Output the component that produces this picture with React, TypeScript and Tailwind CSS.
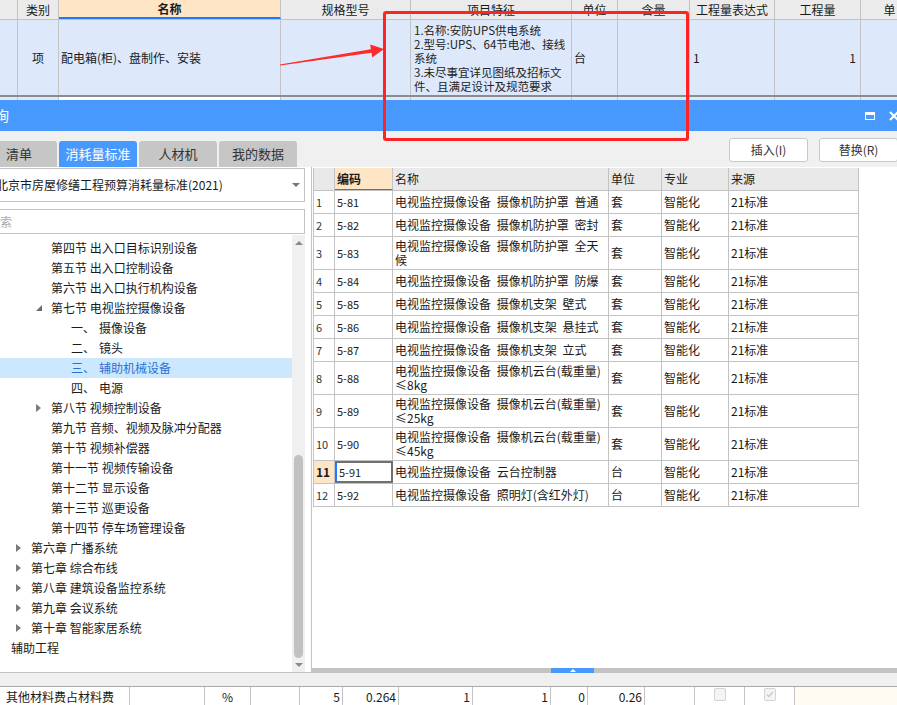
import React from "react";

const cjk = "font-['Noto_Sans_CJK_SC','Noto_Sans',sans-serif]";

// background spreadsheet (top of the screenshot)
const sheetCols = [
  { w: 18, head: "" },
  { w: 41, head: "类别" },
  { w: 222, head: "名称", active: true },
  { w: 130, head: "规格型号" },
  { w: 161, head: "项目特征" },
  { w: 46, head: "单位" },
  { w: 72, head: "含量" },
  { w: 85, head: "工程量表达式" },
  { w: 86, head: "工程量" },
  { w: 58, head: "单" },
];

const features = [
  "1.名称:安防UPS供电系统",
  "2.型号:UPS、64节电池、接线",
  "系统",
  "3.未尽事宜详见图纸及招标文",
  "件、且满足设计及规范要求",
];

type TreeItem = {
  text: string;
  pad: number;
  arrow?: "open" | "closed";
  prefix?: string;
  selected?: boolean;
  plain?: boolean;
};

const treeItems: TreeItem[] = [
  { text: "第四节 出入口目标识别设备", pad: 35 },
  { text: "第五节 出入口控制设备", pad: 35 },
  { text: "第六节 出入口执行机构设备", pad: 35 },
  { text: "第七节 电视监控摄像设备", pad: 35, arrow: "open" },
  { prefix: "一、", text: "摄像设备", pad: 55 },
  { prefix: "二、", text: "镜头", pad: 55 },
  { prefix: "三、", text: "辅助机械设备", pad: 55, selected: true },
  { prefix: "四、", text: "电源", pad: 55 },
  { text: "第八节 视频控制设备", pad: 35, arrow: "closed" },
  { text: "第九节 音频、视频及脉冲分配器", pad: 35 },
  { text: "第十节 视频补偿器", pad: 35 },
  { text: "第十一节 视频传输设备", pad: 35 },
  { text: "第十二节 显示设备", pad: 35 },
  { text: "第十三节 巡更设备", pad: 35 },
  { text: "第十四节 停车场管理设备", pad: 35 },
  { text: "第六章 广播系统", pad: 15, arrow: "closed" },
  { text: "第七章 综合布线", pad: 15, arrow: "closed" },
  { text: "第八章 建筑设备监控系统", pad: 15, arrow: "closed" },
  { text: "第九章 会议系统", pad: 15, arrow: "closed" },
  { text: "第十章 智能家居系统", pad: 15, arrow: "closed" },
  { text: "辅助工程", pad: 11, plain: true },
];

const quotaCols = [21, 58, 216, 53, 67, 130];

const quotaRows = [
  { no: "1", code: "5-81", name: "电视监控摄像设备 摄像机防护罩 普通", unit: "套" },
  { no: "2", code: "5-82", name: "电视监控摄像设备 摄像机防护罩 密封", unit: "套" },
  { no: "3", code: "5-83", name: "电视监控摄像设备 摄像机防护罩 全天\n候", unit: "套" },
  { no: "4", code: "5-84", name: "电视监控摄像设备 摄像机防护罩 防爆", unit: "套" },
  { no: "5", code: "5-85", name: "电视监控摄像设备 摄像机支架 壁式", unit: "套" },
  { no: "6", code: "5-86", name: "电视监控摄像设备 摄像机支架 悬挂式", unit: "套" },
  { no: "7", code: "5-87", name: "电视监控摄像设备 摄像机支架 立式", unit: "套" },
  { no: "8", code: "5-88", name: "电视监控摄像设备 摄像机云台(载重量)\n≤8kg", unit: "套" },
  { no: "9", code: "5-89", name: "电视监控摄像设备 摄像机云台(载重量)\n≤25kg", unit: "套" },
  { no: "10", code: "5-90", name: "电视监控摄像设备 摄像机云台(载重量)\n≤45kg", unit: "套" },
  { no: "11", code: "5-91", name: "电视监控摄像设备 云台控制器", unit: "台", current: true },
  { no: "12", code: "5-92", name: "电视监控摄像设备 照明灯(含红外灯)", unit: "台" },
];

type BottomCell = { w: number; text: string; align?: "left" | "center" | "right"; box?: "empty" | "checked" };

const bottomCells: BottomCell[] = [
  { w: 130, text: "其他材料费占材料费", align: "left" },
  { w: 75, text: "" },
  { w: 46, text: "%", align: "center" },
  { w: 49, text: "" },
  { w: 43, text: "5", align: "right" },
  { w: 56, text: "0.264", align: "right" },
  { w: 74, text: "1", align: "right" },
  { w: 78, text: "1", align: "right" },
  { w: 37, text: "0", align: "right" },
  { w: 57, text: "0.26", align: "right" },
  { w: 50, text: "" },
  { w: 50, text: "", align: "center", box: "empty" },
  { w: 50, text: "", align: "center", box: "checked" },
];

const alignClass = {
  left: "justify-start pl-[6px]",
  center: "justify-center",
  right: "justify-end pr-[2px]",
};

const TreeArrow = ({ kind }: { kind?: "open" | "closed" }) => (
  <span className="flex w-[16px] items-center justify-start pl-[1px]">
    {kind === "open" && (
      <svg width="6" height="6" viewBox="0 0 6 6">
        <polygon points="6,0 6,6 0,6" fill="#6b6b6b" />
      </svg>
    )}
    {kind === "closed" && (
      <svg width="5" height="8" viewBox="0 0 5 8">
        <polygon points="0,0 5,4 0,8" fill="#7a7a7a" />
      </svg>
    )}
  </span>
);

const TopSheet = () => (
  <div className="h-[100px] bg-[#dde9fb]">
    <div className="flex h-[20px] border-b border-[#c3c3c3] bg-[#ebebeb]">
      {sheetCols.map((c, i) => (
        <div
          key={i}
          style={{ width: c.w }}
          className={`flex shrink-0 items-center justify-center border-r border-[#c3c3c3] leading-none ${
            c.active ? "border-b-2 border-b-[#1e7bff] bg-[#fde5c6] font-bold" : ""
          }`}
        >
          {c.head}
        </div>
      ))}
    </div>
    <div className="flex h-[75px]">
      {sheetCols.map((c, i) => (
        <div key={i} style={{ width: c.w }} className="flex shrink-0 items-center border-r border-[#c3c3c3]">
          {i === 1 && <span className="w-full text-center">项</span>}
          {i === 2 && <span className="pl-[2px]">配电箱(柜)、盘制作、安装</span>}
          {i === 4 && (
            <div className="pl-[3px] text-[11.5px] leading-[14px] text-[#222]">
              {features.map((f) => (
                <div key={f} className="h-[14px] whitespace-nowrap">
                  {f}
                </div>
              ))}
            </div>
          )}
          {i === 5 && <span className="pl-[2px]">台</span>}
          {i === 7 && <span className="pl-[3px]">1</span>}
          {i === 8 && <span className="w-full pr-[4px] text-right">1</span>}
        </div>
      ))}
    </div>
    <div className="h-[2px] bg-[#8c8c8c]" />
    <div className="flex h-[3px]">
      {sheetCols.map((c, i) => (
        <div
          key={i}
          style={{ width: c.w }}
          className={`shrink-0 border-r border-[#c3c3c3] ${i === 2 ? "bg-white" : ""}`}
        />
      ))}
    </div>
  </div>
);

const QuotaTable = () => (
  <div className="ml-[1px] w-[546px] border-l border-[#c3c3c3]">
    <div className="flex h-[23px] border-b border-[#c3c3c3] bg-[#e9e9e9]">
      {["", "编码", "名称", "单位", "专业", "来源"].map((h, i) => (
        <div
          key={i}
          style={{ width: quotaCols[i] }}
          className={`flex shrink-0 items-center border-r border-[#c3c3c3] pl-[2px] ${
            i === 1 ? "border-b border-b-[#1e7bff] bg-[#fde5c6] font-bold" : ""
          }`}
        >
          {h}
        </div>
      ))}
    </div>
    {quotaRows.map((r) => {
      const tall = r.name.includes("\n");
      return (
        <div key={r.no} className={`flex border-b border-[#c3c3c3] bg-white ${tall ? "h-[33px]" : "h-[23px]"}`}>
          <div
            style={{ width: quotaCols[0] }}
            className={`flex shrink-0 items-center border-r border-[#c3c3c3] pl-[2px] ${
              r.current ? "bg-[#fde5c6] text-[12px] font-bold" : "text-[11px] text-[#333]"
            }`}
          >
            {r.no}
          </div>
          <div
            style={{ width: quotaCols[1] }}
            className={`flex shrink-0 items-center pl-[2px] text-[11px] ${
              r.current ? "border-2 border-[#707070] border-l-[#1e7bff]" : "border-r border-[#c3c3c3]"
            }`}
          >
            {r.code}
          </div>
          <div
            style={{ width: quotaCols[2] }}
            className="flex shrink-0 items-center whitespace-pre-line border-r border-[#c3c3c3] pl-[2px] leading-[14px] [word-spacing:3px]"
          >
            {r.name}
          </div>
          <div style={{ width: quotaCols[3] }} className="flex shrink-0 items-center border-r border-[#c3c3c3] pl-[2px]">
            {r.unit}
          </div>
          <div style={{ width: quotaCols[4] }} className="flex shrink-0 items-center border-r border-[#c3c3c3] pl-[2px]">
            智能化
          </div>
          <div style={{ width: quotaCols[5] }} className="flex shrink-0 items-center border-r border-[#c3c3c3] pl-[2px]">
            21标准
          </div>
        </div>
      );
    })}
  </div>
);

const Dialog = () => (
  <div className="flex flex-col">
    {/* title bar */}
    <div className="flex h-[31px] items-center bg-[#4899fd] text-white">
      <span className="ml-[-5px] text-[14px]">询</span>
      <div className="ml-auto mr-[14px] h-[8px] w-[10px] border-[1.5px] border-t-[3px] border-white" />
      <svg width="10" height="10" viewBox="0 0 10 10" className="mr-[-2px]">
        <path d="M1 1 L9 9 M9 1 L1 9" stroke="white" strokeWidth="2" />
      </svg>
    </div>

    {/* tabs + buttons */}
    <div className="flex h-[36px] bg-[#f0f0f0]">
      <div className="flex items-end gap-[2px] pt-[10px]">
        <div className="ml-[-20px] flex h-[26px] w-[77px] items-center justify-start rounded-t-[3px] bg-[#c6c6c6] pl-[26px] text-[13px] text-[#333]">
          清单
        </div>
        <div className="flex h-[26px] w-[78px] items-center justify-center rounded-t-[3px] bg-[#4899fd] text-[13px] text-white">
          消耗量标准
        </div>
        <div className="flex h-[26px] w-[78px] items-center justify-center rounded-t-[3px] bg-[#c6c6c6] text-[13px] text-[#333]">
          人材机
        </div>
        <div className="flex h-[26px] w-[78px] items-center justify-center rounded-t-[3px] bg-[#c6c6c6] text-[13px] text-[#333]">
          我的数据
        </div>
      </div>
      <div className="ml-auto mr-[-1px] mt-[7px] flex gap-[11px]">
        <button className="h-[24px] w-[79px] rounded-[3px] border border-[#c9c9c9] bg-white text-[12px] text-[#333]">
          插入(I)
        </button>
        <button className="h-[24px] w-[79px] rounded-[3px] border border-[#c9c9c9] bg-white text-[12px] text-[#333]">
          替换(R)
        </button>
      </div>
    </div>

    {/* panels */}
    <div className="flex h-[506px]">
      <div className="flex w-[311px] shrink-0 flex-col border-b border-[#c3c3c3] bg-white">
        <div className="ml-[-2px] mt-[1px] flex h-[34px] w-[307px] items-center border border-[#c3c3c3] bg-white">
          <span className="ml-[-3px] whitespace-nowrap text-[12px]">北京市房屋修缮工程预算消耗量标准(2021)</span>
          <svg width="8" height="4" viewBox="0 0 8 4" className="ml-auto mr-[4px]">
            <polygon points="0,0 8,0 4,4" fill="#777" />
          </svg>
        </div>
        <div className="ml-[-2px] mt-[7px] flex h-[25px] w-[307px] items-center border border-[#c3c3c3] bg-white">
          <span className="ml-[-11px] text-[12px] text-[#aaa]">搜索</span>
        </div>
        <div className="flex min-h-0 flex-1 pt-[1px]">
          <div className="w-[292px] shrink-0 pt-[3px]">
            {treeItems.map((t) => (
              <div
                key={t.text}
                style={{ paddingLeft: t.pad }}
                className={`flex h-[20px] items-center whitespace-nowrap text-[12px] ${
                  t.selected ? "bg-[#cce8ff] text-[#2f6fd0]" : "text-[#1a1a1a]"
                }`}
              >
                {!t.plain && <TreeArrow kind={t.arrow} />}
                {t.prefix && <span className="w-[28px]">{t.prefix}</span>}
                <span>{t.text}</span>
              </div>
            ))}
          </div>
          <div className="flex w-[13px] shrink-0 flex-col items-center bg-[#f0f0f0]">
            <div className="flex h-[16px] items-center">
              <svg width="8" height="4" viewBox="0 0 8 4">
                <polygon points="4,0 8,4 0,4" fill="#8a8a8a" />
              </svg>
            </div>
            <div className="h-[204px]" />
            <div className="h-[203px] w-[9px] rounded-full bg-[#c1c1c1]" />
            <div className="flex flex-1 items-center">
              <svg width="8" height="4" viewBox="0 0 8 4">
                <polygon points="0,0 8,0 4,4" fill="#8a8a8a" />
              </svg>
            </div>
          </div>
          <div className="flex-1" />
        </div>
      </div>

      <div className="flex flex-1 flex-col border-l border-[#c3c3c3] bg-white">
        <div className="flex-1 pt-[1px]">
          <QuotaTable />
        </div>
        <div className="flex h-[5px] justify-center bg-[#c3c3c3]">
          <div className="ml-[-64px] flex w-[43px] items-center justify-center bg-[#4899fd]">
            <svg width="6" height="3" viewBox="0 0 6 3">
              <polygon points="3,0 6,3 0,3" fill="white" />
            </svg>
          </div>
        </div>
      </div>
    </div>

    <div className="h-[13px] bg-[#f0f0f0]" />

    {/* bottom detail row */}
    <div className="flex h-[22px] border-t border-[#a9a9a9] bg-white">
      {bottomCells.map((c, i) => (
        <div
          key={i}
          style={{ width: c.w }}
          className={`flex shrink-0 items-start border-r border-[#c3c3c3] pt-[1px] ${
            c.align ? alignClass[c.align] : ""
          }`}
        >
          {c.text}
          {c.box && (
            <div className="flex h-[13px] w-[12px] items-center justify-center rounded-[2px] border border-[#d4d4d4] bg-[#f4f4f4]">
              {c.box === "checked" && (
                <svg width="8" height="7" viewBox="0 0 8 7">
                  <path d="M1 3.5 L3 5.5 L7 1" stroke="#c8c8c8" strokeWidth="1.3" fill="none" />
                </svg>
              )}
            </div>
          )}
        </div>
      ))}
      <div className="flex-1 bg-[#fffaf2]" />
    </div>
  </div>
);

const Annotation = () => (
  <>
    <div className="pointer-events-none absolute left-[383px] top-[11px] h-[130px] w-[306px] rounded-[3px] border-[3px] border-[#ff2424]" />
    <svg className="pointer-events-none absolute left-0 top-0" width="897" height="100" viewBox="0 0 897 100">
      <polygon
        points="280,65.4 371.5,52.8 372.2,57.4 384,49 370.2,44.6 370.9,49.2 280,64.6"
        fill="#ff2a2a"
      />
    </svg>
  </>
);

export default function App() {
  return (
    <div className={`relative h-[705px] w-[897px] overflow-hidden bg-[#f0f0f0] text-[12px] text-[#1a1a1a] ${cjk}`}>
      <TopSheet />
      <Dialog />
      <Annotation />
    </div>
  );
}
